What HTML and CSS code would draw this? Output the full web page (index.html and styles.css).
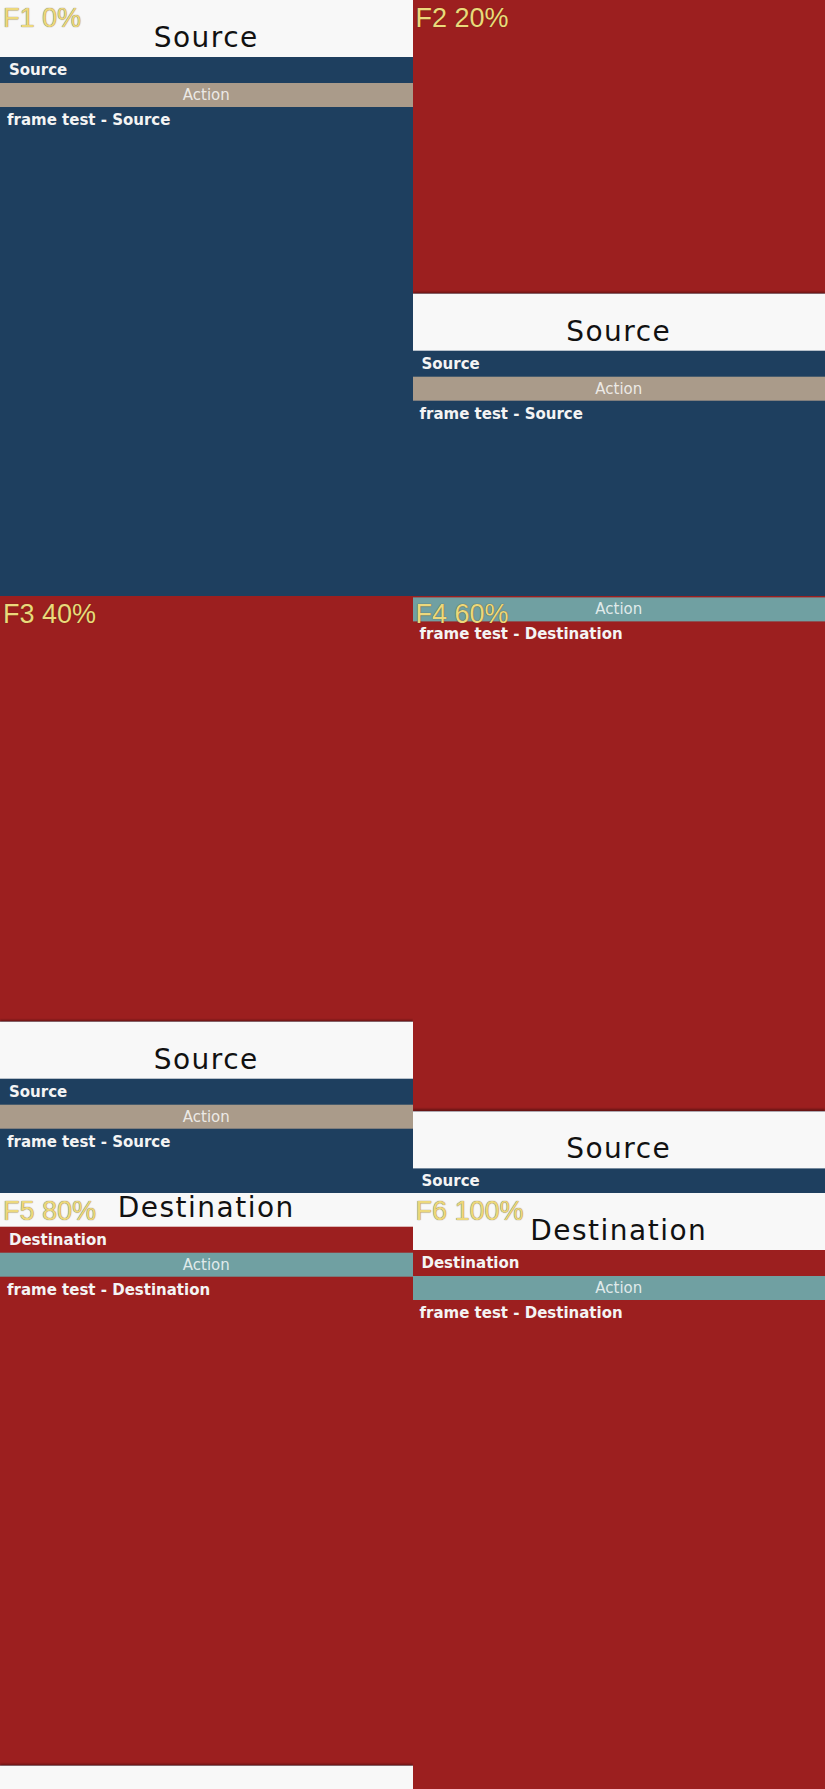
FILE: index.html
```html
<!DOCTYPE html>
<html>
<head>
    <title>Frame test</title>
    <link rel="stylesheet" href="styles.css">
</head>
<body>
    <div class="frames">
        <div class="frame f1">
            <div class="track">
                <div class="page src">
                    <div class="header"><div class="title">Source</div></div>
                    <div class="bar">Source</div>
                    <div class="action">Action</div>
                    <div class="content">frame test - Source</div>
                </div>
            </div>
            <div class="label">F1 0%</div>
        </div>
        <div class="frame f2">
            <div class="track">
                <div class="page dest">
                    <div class="header"><div class="title">Destination</div></div>
                    <div class="bar">Destination</div>
                    <div class="action">Action</div>
                    <div class="content">frame test - Destination</div>
                </div>
                <div class="page src">
                    <div class="header"><div class="title">Source</div></div>
                    <div class="bar">Source</div>
                    <div class="action">Action</div>
                    <div class="content">frame test - Source</div>
                </div>
            </div>
            <div class="label">F2 20%</div>
        </div>
        <div class="frame f3">
            <div class="track">
                <div class="page dest">
                    <div class="header"><div class="title">Destination</div></div>
                    <div class="bar">Destination</div>
                    <div class="action">Action</div>
                    <div class="content">frame test - Destination</div>
                </div>
                <div class="page src">
                    <div class="header"><div class="title">Source</div></div>
                    <div class="bar">Source</div>
                    <div class="action">Action</div>
                    <div class="content">frame test - Source</div>
                </div>
            </div>
            <div class="label">F3 40%</div>
        </div>
        <div class="frame f4">
            <div class="track">
                <div class="page dest">
                    <div class="header"><div class="title">Destination</div></div>
                    <div class="bar">Destination</div>
                    <div class="action">Action</div>
                    <div class="content">frame test - Destination</div>
                </div>
                <div class="page src">
                    <div class="header"><div class="title">Source</div></div>
                    <div class="bar">Source</div>
                    <div class="action">Action</div>
                    <div class="content">frame test - Source</div>
                </div>
            </div>
            <div class="label">F4 60%</div>
        </div>
        <div class="frame f5">
            <div class="track">
                <div class="page dest">
                    <div class="header"><div class="title">Destination</div></div>
                    <div class="bar">Destination</div>
                    <div class="action">Action</div>
                    <div class="content">frame test - Destination</div>
                </div>
                <div class="page src">
                    <div class="header"><div class="title">Source</div></div>
                    <div class="bar">Source</div>
                    <div class="action">Action</div>
                    <div class="content">frame test - Source</div>
                </div>
            </div>
            <div class="label">F5 80%</div>
        </div>
        <div class="frame f6">
            <div class="track">
                <div class="page dest">
                    <div class="header"><div class="title">Destination</div></div>
                    <div class="bar">Destination</div>
                    <div class="action">Action</div>
                    <div class="content">frame test - Destination</div>
                </div>
            </div>
            <div class="label">F6 100%</div>
        </div>
    </div>
</body>
</html>
```

FILE: styles.css
```css
body {
    margin: 0;
    background-color: #9c1f1f;
    font-family: "DejaVu Sans", sans-serif;
}
.frames {
    display: grid;
    grid-template-columns: 1fr 1fr;
    grid-template-rows: repeat(3, 596.33px);
    height: 1789px;
}
.frame {
    position: relative;
    overflow: hidden;
    background-color: #9c1f1f;
}
.track {
    display: flex;
    flex-direction: column;
}
/* how far the destination page has slid in */
.f2 .track { transform: translateY(-302.3px); }
.f3 .track { transform: translateY(-171.3px); }
.f4 .track { transform: translateY(-81.6px); }
.f5 .track { transform: translateY(-23.3px); }

.page {
    height: 596.33px;
    flex-shrink: 0;
    display: flex;
    flex-direction: column;
}
.page.src {
    background-color: #1e3f5f;
    box-shadow: 0px -2px 2px rgba(0, 0, 0, 0.35);
}
.page.dest {
    background-color: #9c1f1f;
}
.header {
    height: 57px;
    box-sizing: border-box;
    padding-top: 21px;
    background-color: #f8f8f8;
}
.title {
    text-align: center;
    font-size: 28px;
    line-height: 34px;
    letter-spacing: 1.5px;
    color: #111111;
}
.bar {
    height: 26px;
    line-height: 26px;
    padding-left: 9px;
    font-size: 15px;
    font-weight: bold;
    color: #f4f4f4;
}
.action {
    height: 24px;
    line-height: 24px;
    text-align: center;
    font-size: 15px;
    color: rgba(255, 255, 255, 0.8);
}
.src .action {
    background-color: #aa9b8a;
}
.dest .action {
    background-color: #70a0a2;
}
.content {
    padding: 4px 7px 0;
    line-height: 18px;
    font-size: 15px;
    font-weight: bold;
    color: #f4f4f4;
}
.label {
    position: absolute;
    top: 3px;
    left: 3px;
    font-family: "Liberation Sans", sans-serif;
    font-size: 27px;
    color: #ecd87c;
    text-shadow: 0px 0px 1px rgba(70, 50, 0, 0.9);
}
```
